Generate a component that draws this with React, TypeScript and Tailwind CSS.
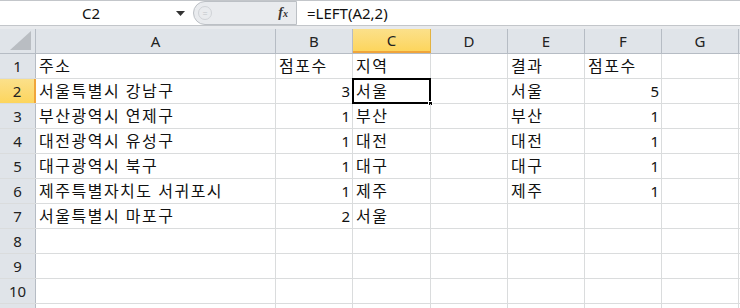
import React from "react";

const cols = [
  { key: "A", w: "w-[240px]" },
  { key: "B", w: "w-[77px]" },
  { key: "C", w: "w-[78px]" },
  { key: "D", w: "w-[77px]" },
  { key: "E", w: "w-[77px]" },
  { key: "F", w: "w-[77px]" },
  { key: "G", w: "w-[77px]" },
];

type Cell = { v: string; num?: boolean };

const rows: Record<number, Record<string, Cell>> = {
  1: { A: { v: "주소" }, B: { v: "점포수" }, C: { v: "지역" }, E: { v: "결과" }, F: { v: "점포수" } },
  2: { A: { v: "서울특별시 강남구" }, B: { v: "3", num: true }, C: { v: "서울" }, E: { v: "서울" }, F: { v: "5", num: true } },
  3: { A: { v: "부산광역시 연제구" }, B: { v: "1", num: true }, C: { v: "부산" }, E: { v: "부산" }, F: { v: "1", num: true } },
  4: { A: { v: "대전광역시 유성구" }, B: { v: "1", num: true }, C: { v: "대전" }, E: { v: "대전" }, F: { v: "1", num: true } },
  5: { A: { v: "대구광역시 북구" }, B: { v: "1", num: true }, C: { v: "대구" }, E: { v: "대구" }, F: { v: "1", num: true } },
  6: { A: { v: "제주특별자치도 서귀포시" }, B: { v: "1", num: true }, C: { v: "제주" }, E: { v: "제주" }, F: { v: "1", num: true } },
  7: { A: { v: "서울특별시 마포구" }, B: { v: "2", num: true }, C: { v: "서울" } },
};

const font = "font-['Noto_Sans','Noto_Sans_CJK_KR',sans-serif]";

function FormulaBar() {
  return (
    <div className="flex h-[25px] border-t border-[#c3c6ca] bg-white">
      <div className="flex w-[193px] items-center">
        <div className="flex-1 pl-[6px] text-center text-[15px] leading-none text-[#111]">C2</div>
        <svg width="9" height="5" viewBox="0 0 9 5" className="mr-[8px]">
          <path d="M0 0h9L4.5 5z" fill="#333" />
        </svg>
      </div>
      <div className="flex w-[104px] items-center rounded-l-[12px] border border-[#bcc0c5] bg-[#e9ebee]">
        <div className="ml-[4px] flex h-[14px] w-[14px] items-center justify-center rounded-full border border-[#d0d3d7] text-[9px] leading-none text-[#c0c3c7]">
          =
        </div>
        <div className="ml-auto mr-[8px] font-['Liberation_Serif',serif] text-[14px] italic font-bold leading-none text-[#333]">
          f<span className="text-[10px]">x</span>
        </div>
      </div>
      <div className="flex flex-1 items-center pl-[10px] text-[15px] leading-none text-[#111]">=LEFT(A2,2)</div>
    </div>
  );
}

function ColumnHeader() {
  return (
    <div className="flex h-[25px] border-b border-[#b6bcc4] bg-[#e0e4e9]">
      <div className="relative w-[36px] border-r border-[#b6bcc4]">
        <svg width="22" height="20" viewBox="0 0 22 20" className="absolute bottom-[2px] right-[3px]">
          <path d="M21 0V19H0z" fill="#b9bdc2" />
        </svg>
      </div>
      {cols.map((c) =>
        c.key === "C" ? (
          <div
            key={c.key}
            className={`${c.w} flex items-center justify-center border-r border-b-2 border-r-[#e3b240] border-b-[#f0a53a] bg-gradient-to-b from-[#fbe08a] to-[#fdd55c] text-[15px] leading-none text-[#222]`}
          >
            {c.key}
          </div>
        ) : (
          <div
            key={c.key}
            className={`${c.w} flex items-center justify-center border-r border-[#b6bcc4] text-[15px] leading-none text-[#222]`}
          >
            {c.key}
          </div>
        )
      )}
    </div>
  );
}

function Row({ n, label = true }: { n: number; label?: boolean }) {
  const data = rows[n] ?? {};
  const sel = n === 2;
  return (
    <div className="flex h-[25px] border-b border-[#dadcdd]">
      <div
        className={`flex w-[36px] items-center justify-center border-r text-[15px] leading-none ${
          sel
            ? "border-r-2 border-r-[#f0a53a] bg-gradient-to-b from-[#fbe08a] to-[#fdd55c] text-[#222]"
            : "border-[#b6bcc4] bg-[#e0e4e9] text-[#222]"
        }`}
      >
        {label ? n : null}
      </div>
      {cols.map((c) => {
        const cell = data[c.key];
        const isSel = sel && c.key === "C";
        return (
          <div
            key={c.key}
            className={`${c.w} relative flex items-center border-r border-[#dadcdd] leading-none text-[#111] ${
              cell?.num ? "justify-end pr-[2px] text-[15px]" : "pl-[3px] text-[16px] tracking-[1.5px]"
            }`}
          >
            {cell?.v}
            {isSel && (
              <>
                <div className="pointer-events-none absolute -left-[1px] -top-[1px] bottom-[-1px] right-[-1px] border-2 border-black" />
                <div className="absolute -bottom-[3px] -right-[3px] h-[5px] w-[5px] border border-white bg-black" />
              </>
            )}
          </div>
        );
      })}
    </div>
  );
}

export default function App() {
  return (
    <div className={`h-[308px] w-[740px] overflow-hidden bg-white ${font}`}>
      <FormulaBar />
      <div className="h-[4px] border-t border-[#c3c6ca] bg-[#e8eaed]" />
      <ColumnHeader />
      {Array.from({ length: 10 }, (_, i) => (
        <Row key={i + 1} n={i + 1} />
      ))}
      <Row n={11} label={false} />
    </div>
  );
}
